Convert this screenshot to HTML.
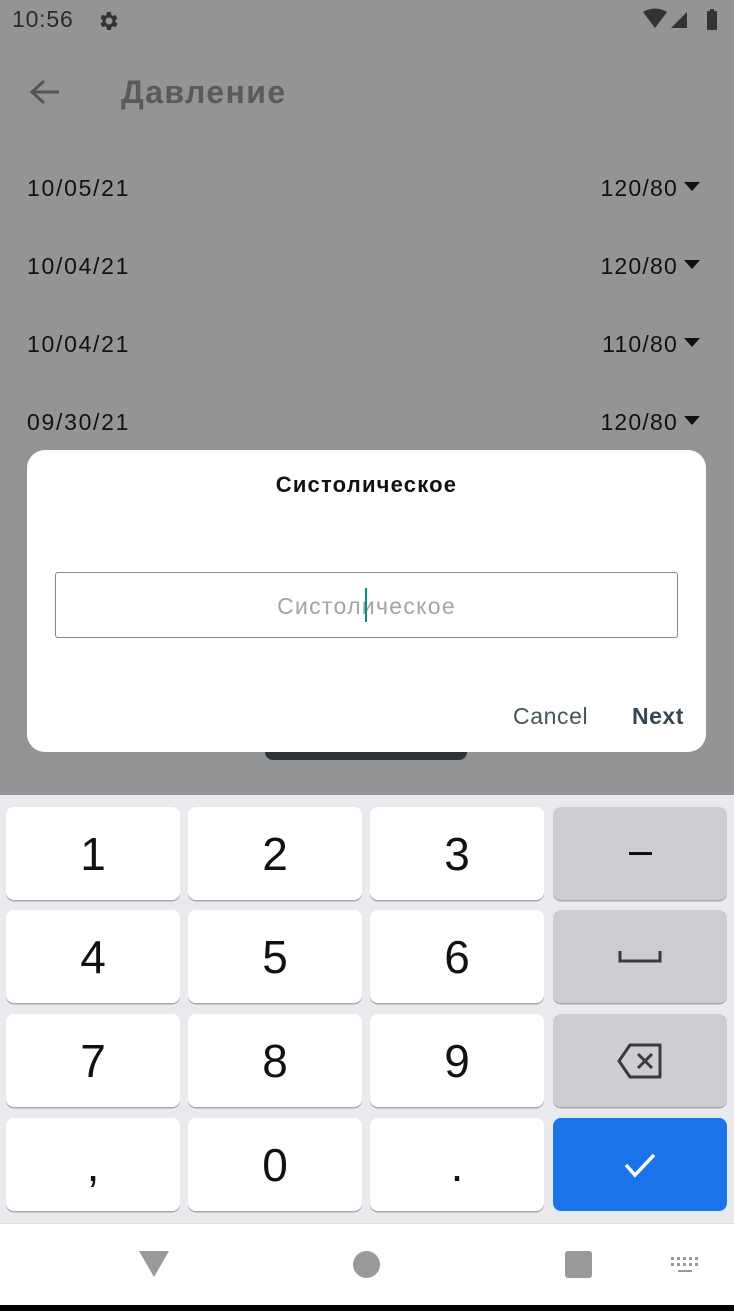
<!DOCTYPE html>
<html><head><meta charset="utf-8"><style>
*{margin:0;padding:0;box-sizing:border-box}
body{width:734px;height:1311px;position:relative;overflow:hidden;background:#939496;font-family:"Liberation Sans","Noto Sans CJK SC",sans-serif}
.a{position:absolute}
.row{position:absolute;left:27px;right:34px;font-size:23px;color:#111;letter-spacing:1.7px}
.row span{position:absolute;right:0;letter-spacing:1.2px}
.row span:after{content:"";display:inline-block;margin-left:6px;border-left:8px solid transparent;border-right:8px solid transparent;border-top:9px solid #111;vertical-align:5px}
.key{position:absolute;width:174px;height:93px;background:#fff;border-radius:8px;box-shadow:0 1.5px 0 #a9abaf;font-size:46px;color:#111;display:flex;align-items:center;justify-content:center}
.g{background:#ccced3}
</style></head><body>
<div class="a" style="left:12px;top:6px;font-size:23px;color:#2a2a2a;letter-spacing:0.8px">10:56</div>
<svg class="a" style="left:96px;top:9px" width="24" height="24" viewBox="0 0 24 24"><path fill="#333" d="M19.4 13a7.5 7.5 0 000-2l2.1-1.6-2-3.5-2.5 1a7 7 0 00-1.7-1L15 3h-4l-.4 2.7a7 7 0 00-1.7 1l-2.5-1-2 3.5L6.6 11a7.5 7.5 0 000 2l-2.1 1.6 2 3.5 2.5-1a7 7 0 001.7 1L11 21h4l.4-2.7a7 7 0 001.7-1l2.5 1 2-3.5zM13 15.5a3.5 3.5 0 110-7 3.5 3.5 0 010 7z"/></svg>
<svg class="a" style="left:643px;top:8px" width="82" height="24" viewBox="0 0 82 24"><path fill="#333" d="M0 4Q12-3 24 4L12 20Z"/><path fill="#333" d="M28 20L44 4V20Z"/><rect x="64" y="3" width="10" height="19" rx="1" fill="#333"/><rect x="67" y="1" width="4" height="3" fill="#333"/></svg>
<svg class="a" style="left:28px;top:78px" width="34" height="30" viewBox="0 0 34 30"><path d="M31 14H5M16 3L4 14l12 11" stroke="#555" stroke-width="3" fill="none"/></svg>
<div class="a" style="left:121px;top:74px;font-size:32px;font-weight:bold;color:#5a5a5a;letter-spacing:1.4px">Давление</div>
<div class="row" style="top:175px">10/05/21<span>120/80</span></div>
<div class="row" style="top:253px">10/04/21<span>120/80</span></div>
<div class="row" style="top:331px">10/04/21<span>110/80</span></div>
<div class="row" style="top:409px">09/30/21<span>120/80</span></div>
<div class="a" style="left:265px;top:735px;width:202px;height:25px;background:#2f3537;border-radius:8px"></div>
<div class="a" style="left:27px;top:450px;width:679px;height:302px;background:#fff;border-radius:18px">
<div class="a" style="left:0;right:0;top:22px;text-align:center;font-size:22px;font-weight:bold;color:#111;letter-spacing:1.2px">Систолическое</div>
<div class="a" style="left:28px;top:122px;width:623px;height:66px;border:1px solid #888;border-radius:3px;text-align:center;line-height:66px;font-size:23px;color:#a4a4a4;letter-spacing:1.3px">Систолическое</div>
<div class="a" style="left:338px;top:138px;width:2px;height:34px;background:#0a8d80"></div>
<div class="a" style="left:486px;top:253px;font-size:23px;color:#44545b;letter-spacing:0.6px">Cancel</div>
<div class="a" style="left:605px;top:253px;font-size:23px;font-weight:bold;color:#37474f;letter-spacing:0.5px">Next</div>
</div>
<div class="a" style="left:0;top:795px;width:734px;height:428px;background:#e8eaed"></div>
<div class="key" style="left:6px;top:807px">1</div><div class="key" style="left:188px;top:807px">2</div><div class="key" style="left:370px;top:807px">3</div>
<div class="key g" style="left:553px;top:807px"><div style="width:23px;height:3px;background:#111"></div></div>
<div class="key" style="left:6px;top:910px">4</div><div class="key" style="left:188px;top:910px">5</div><div class="key" style="left:370px;top:910px">6</div>
<div class="key g" style="left:553px;top:910px"><svg width="44" height="14"><path d="M2 1v10h40V1" stroke="#3a3a3a" stroke-width="3" fill="none"/></svg></div>
<div class="key" style="left:6px;top:1014px">7</div><div class="key" style="left:188px;top:1014px">8</div><div class="key" style="left:370px;top:1014px">9</div>
<div class="key g" style="left:553px;top:1014px"><svg width="48" height="38" viewBox="0 0 48 38"><path d="M14 3H44V35H14L3 19Z" stroke="#3a3a3a" stroke-width="3" fill="none" stroke-linejoin="round"/><path d="M22 12l14 14M36 12L22 26" stroke="#3a3a3a" stroke-width="3"/></svg></div>
<div class="key" style="left:6px;top:1118px">,</div><div class="key" style="left:188px;top:1118px">0</div><div class="key" style="left:370px;top:1118px">.</div>
<div class="key" style="left:553px;top:1118px;background:#1a73e8;box-shadow:none"><svg width="34" height="26"><path d="M3 13l9 10L31 3" stroke="#fff" stroke-width="3.5" fill="none"/></svg></div>
<div class="a" style="left:0;top:1223px;width:734px;height:82px;background:#fff;border-top:1px solid #e0e0e0"></div>
<svg class="a" style="left:139px;top:1251px" width="30" height="27"><path d="M0 0H30L15 26Z" fill="#999"/></svg>
<div class="a" style="left:353px;top:1251px;width:27px;height:27px;border-radius:50%;background:#999"></div>
<div class="a" style="left:565px;top:1251px;width:27px;height:27px;border-radius:3px;background:#999"></div>
<svg class="a" style="left:671px;top:1257px" width="30" height="17"><g fill="#999"><rect x="0" y="0" width="3" height="3"/><rect x="6" y="0" width="3" height="3"/><rect x="12" y="0" width="3" height="3"/><rect x="18" y="0" width="3" height="3"/><rect x="24" y="0" width="3" height="3"/><rect x="0" y="6" width="3" height="3"/><rect x="6" y="6" width="3" height="3"/><rect x="12" y="6" width="3" height="3"/><rect x="18" y="6" width="3" height="3"/><rect x="24" y="6" width="3" height="3"/><rect x="7" y="13" width="14" height="2"/></g></svg>
<div class="a" style="left:0;top:1305px;width:734px;height:6px;background:#000"></div>
</body></html>
